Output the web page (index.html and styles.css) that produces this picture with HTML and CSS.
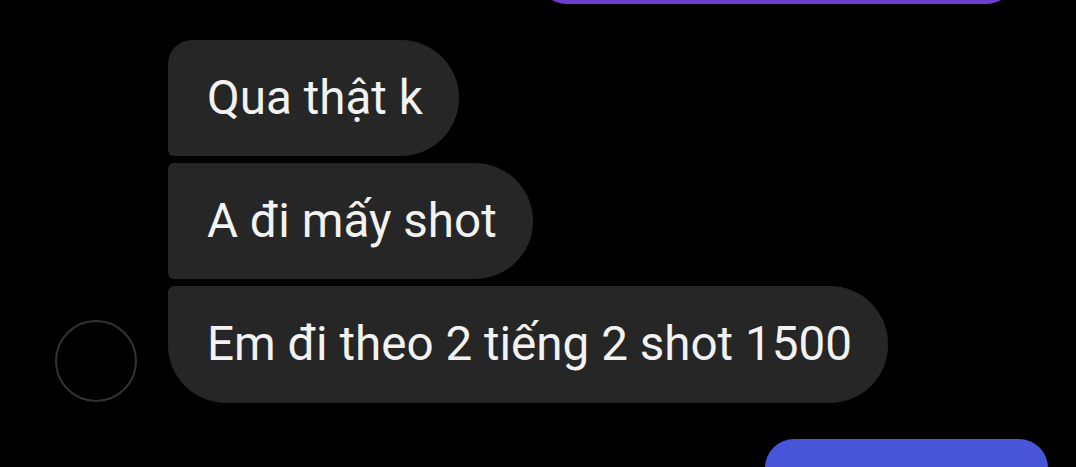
FILE: index.html
```html
<!DOCTYPE html>
<html lang="vi">
<head>
<meta charset="utf-8">
<link rel="stylesheet" href="styles.css">
</head>
<body>
<div class="chat">
  <div class="bubble sent sent-top"></div>
  <div class="group">
    <div class="avatar"></div>
    <div class="bubbles">
      <div class="bubble recv first">Qua thật k</div>
      <div class="bubble recv mid">A đi mấy shot</div>
      <div class="bubble recv last">Em đi theo 2 tiếng 2 shot 1500</div>
    </div>
  </div>
  <div class="bubble sent sent-bottom"></div>
</div>
</body>
</html>
```
FILE: styles.css
```css
html, body {
  margin: 0;
  padding: 0;
  background: #000;
  height: 100%;
  overflow: hidden;
}
.chat {
  display: flex;
  flex-direction: column;
  font-family: Roboto, "Noto Sans", sans-serif;
}
.bubble {
  box-sizing: border-box;
  border-radius: 58px;
}
.sent-top {
  align-self: flex-start;
  margin-left: 537px;
  width: 479px;
  height: 60px;
  margin-top: -56px;
  background: #6a3fcb;
}
.sent-bottom {
  align-self: flex-start;
  margin-left: 765px;
  width: 283px;
  height: 29px;
  margin-top: 36px;
  background: #4855d8;
  border-radius: 58px 58px 0 0;
}
.group {
  display: flex;
  align-items: flex-end;
  margin-top: 36px;
  padding-left: 55px;
}
.avatar {
  width: 82px;
  height: 82px;
  box-sizing: border-box;
  border: 2px solid #333;
  border-radius: 50%;
  margin-bottom: 1px;
  flex: none;
}
.bubbles {
  display: flex;
  flex-direction: column;
  align-items: flex-start;
  gap: 7px;
  margin-left: 31px;
}
.recv {
  background: #262626;
  color: #f2f2f2;
  font-size: 47.6px;
  line-height: 52px;
  height: 116px;
  padding: 32px 36px 32px 39px;
  white-space: nowrap;
}
.first {
  border-radius: 24px 58px 58px 6px;
}
.mid {
  border-radius: 6px 58px 58px 6px;
}
.last {
  border-radius: 6px 58px 58px 58px;
  height: 117px;
}
```
